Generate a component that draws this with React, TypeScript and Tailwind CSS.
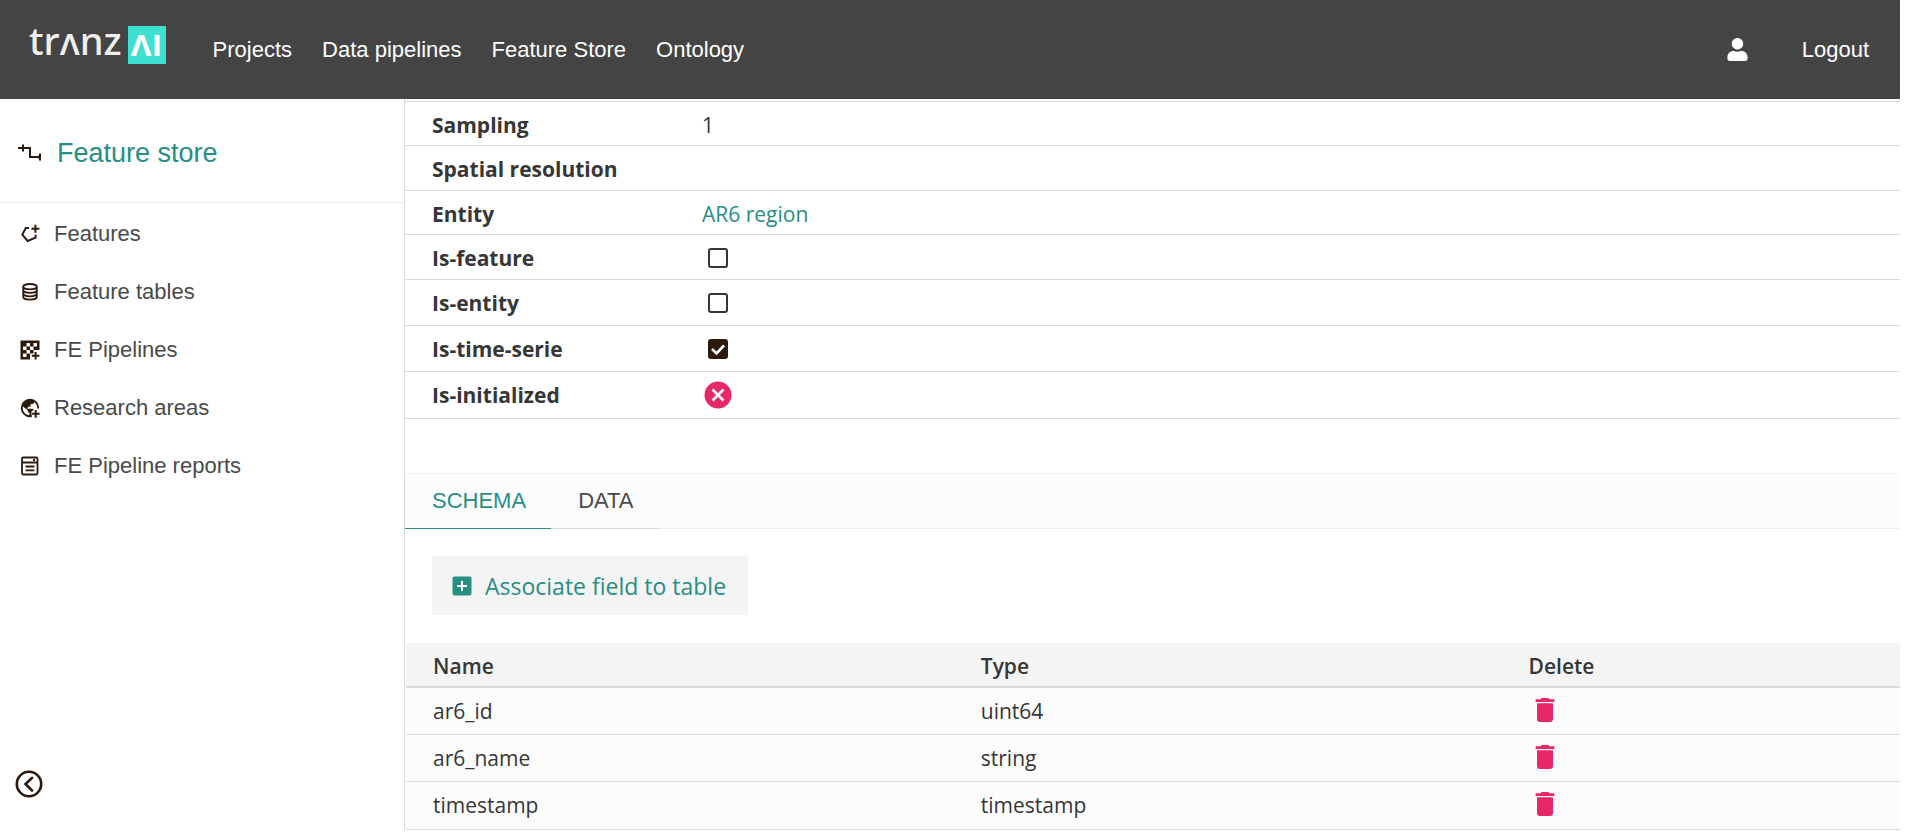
import type { ReactNode } from "react";
import { FaUser } from "react-icons/fa";
import { MdDelete } from "react-icons/md";

const navLinks = ["Projects", "Data pipelines", "Feature Store", "Ontology"];

const fields = [
  { name: "ar6_id", type: "uint64" },
  { name: "ar6_name", type: "string" },
  { name: "timestamp", type: "timestamp" },
];

function Logo() {
  return (
    <a href="#" aria-label="tranzAI" className="flex h-[38px] items-center gap-[6px] font-['Noto_Sans',sans-serif] text-[38px] leading-[38px] font-semibold text-[#f0f0f0]">
      <span className="pb-[11px] font-medium">trʌnz</span>
      <span className="flex h-[38px] w-[38px] items-center justify-center bg-[#40e0d0] pb-2 text-white">ʌı</span>
    </a>
  );
}

function RouteIcon() {
  return (
    <svg width="24" height="18" viewBox="0 0 24 18" fill="none" stroke="currentColor" strokeWidth="2" aria-hidden="true">
      <path d="M0 4h12v9h10M5 0.5v7M22 9.5v7" />
      <path d="M22.5 9.5v7l-3.5-3.5z" fill="currentColor" stroke="none" />
    </svg>
  );
}

function FeatureIcon() {
  return (
    <svg width="20" height="20" viewBox="0 0 20 20" fill="none" stroke="currentColor" strokeWidth="2" aria-hidden="true">
      <path d="M9 4H5.800L2.300 10.600l5.300 6.400 8-3.400V10.800M15.400 0.800v8M11.400 4.800h8" />
    </svg>
  );
}

function DatabaseIcon() {
  return (
    <svg width="20" height="20" viewBox="0 0 20 20" fill="none" stroke="currentColor" strokeWidth="1.800" aria-hidden="true">
      <ellipse cx="10" cy="4.700" rx="6.800" ry="2.700" />
      <path d="M3.200 4.700v10.300c0 1.500 3 2.700 6.800 2.700s6.800-1.200 6.800-2.700V4.700M3.200 8.200c0 1.500 3 2.700 6.800 2.700s6.800-1.200 6.800-2.700M3.200 11.600c0 1.500 3 2.700 6.800 2.700s6.800-1.200 6.800-2.700" />
    </svg>
  );
}

function CheckerPlusIcon() {
  return (
    <svg width="20" height="20" viewBox="0 0 20 20" aria-hidden="true">
      <path d="M0.500 0.500h19v19h-19z" fill="currentColor" />
      <path
        d="M6.500 3H10v3.500H6.500zM13.500 3H17v3.500h-3.500zM3 6.500h3.500V10H3zM10 6.500h3.500V10H10zM6.500 10H10v3.500H6.500zM3 13.500h3.500V17H3zM10 13.500h1.500V20H10zM13.500 10H20v10h-9.500v-6.500h3z"
        fill="white"
      />
      <path d="M15.600 12v7.600M11.800 15.800h7.600" stroke="currentColor" strokeWidth="2" />
    </svg>
  );
}

function GlobePlusIcon() {
  return (
    <svg width="20" height="20" viewBox="0 0 20 20" aria-hidden="true">
      <circle cx="10" cy="10" r="8.300" fill="none" stroke="currentColor" strokeWidth="1.900" />
      <path d="M3.500 5C5 2.500 7.300 1.500 10 1.500c1.600 0 3 .4 4 .9v1.900c0 1-.8 1.800-1.800 1.800h-1.700v1.800c0 .6-.4.900-.9.900H7.800v1.800L6 10.500 2.500 8z" fill="currentColor" />
      <path d="M2 8l5.800 4.200v.8c0 1 .7 1.800 1.600 1.800v3.700h2V14l2-1.500v-.9c0-.5-.4-.9-.9-.9H7.500z" fill="currentColor" />
      <path d="M11.800 12.800h2.500v-2.300H20V20h-8.200z" fill="white" />
      <path d="M15.700 12v7.800M11.800 15.800h7.800" stroke="currentColor" strokeWidth="2" />
    </svg>
  );
}

function ReportIcon() {
  return (
    <svg width="20" height="20" viewBox="0 0 20 20" fill="none" stroke="currentColor" strokeWidth="1.800" aria-hidden="true">
      <rect x="2" y="1.500" width="15.500" height="17" rx="1.200" />
      <path d="M2 6.500h15.500M5.500 10.500h9M5.500 14.300h9M13 4h2" />
    </svg>
  );
}

function CloseCircleIcon() {
  return (
    <svg width="28" height="28" viewBox="0 0 28 28" role="img" aria-label="No">
      <circle cx="14" cy="14" r="13.500" fill="#e72866" />
      <path d="M8.500 8.500l11 11M19.500 8.500l-11 11" stroke="white" strokeWidth="2.600" />
    </svg>
  );
}

function PlusBoxIcon() {
  return (
    <svg width="20" height="20" viewBox="0 0 20 20" aria-hidden="true">
      <rect x="0.500" y="0.500" width="19" height="19" rx="2" fill="currentColor" />
      <path d="M10 5v10M5 10h10" stroke="white" strokeWidth="2" />
    </svg>
  );
}

function CollapseIcon() {
  return (
    <svg width="28" height="28" viewBox="0 0 28 28" fill="none" stroke="currentColor" strokeWidth="2.600" strokeLinecap="round" aria-hidden="true">
      <circle cx="14" cy="14" r="12.200" />
      <path d="M17 8l-6.500 6 6.500 6.500" />
    </svg>
  );
}

function Tick({ id, checked = false }: { id: string; checked?: boolean }) {
  return (
    <span className="ml-[6px] inline-grid">
      <input
        id={id}
        type="checkbox"
        defaultChecked={checked}
        className="peer col-start-1 row-start-1 size-5 appearance-none rounded-[3px] border-2 border-[#363636] checked:border-[#2c1a0e] checked:bg-[#2c1a0e]"
      />
      <svg viewBox="0 0 20 20" className="pointer-events-none col-start-1 row-start-1 size-5 opacity-0 peer-checked:opacity-100" aria-hidden="true">
        <path d="M4 10l4.500 4.500L16 6.500" fill="none" stroke="white" strokeWidth="2.600" />
      </svg>
    </span>
  );
}

const menu: { label: string; icon: ReactNode }[] = [
  { label: "Features", icon: <FeatureIcon /> },
  { label: "Feature tables", icon: <DatabaseIcon /> },
  { label: "FE Pipelines", icon: <CheckerPlusIcon /> },
  { label: "Research areas", icon: <GlobePlusIcon /> },
  { label: "FE Pipeline reports", icon: <ReportIcon /> },
];

const details: { label: string; value: ReactNode; row: string; field?: string }[] = [
  { label: "Sampling", value: "1", row: "h-11 pt-[2px]" },
  { label: "Spatial resolution", value: "", row: "h-[45px] pt-[2px]" },
  { label: "Entity", value: <a href="#" className="text-[#268e83]">AR6 region</a>, row: "h-11 pt-[2px]" },
  { label: "Is-feature", value: <Tick id="is-feature" />, row: "h-[45px] pt-[2px]", field: "is-feature" },
  { label: "Is-entity", value: <Tick id="is-entity" />, row: "h-[46px]", field: "is-entity" },
  { label: "Is-time-serie", value: <Tick id="is-time-serie" checked />, row: "h-[46px]", field: "is-time-serie" },
  { label: "Is-initialized", value: <span className="ml-[2px]"><CloseCircleIcon /></span>, row: "h-[47px]" },
];

export default function App() {
  return (
    <div className="min-h-screen bg-white pr-[19px] font-['Liberation_Sans',Arial,sans-serif] text-[22px] leading-[26px] text-[#4a4a4a]">
      <header className="flex h-[99px] items-center bg-[#444444] pr-[31px] pl-[29px] text-white">
        <div className="pb-[9px]">
          <Logo />
        </div>
        <nav className="ml-[47px] flex flex-1 gap-[30px]">
          {navLinks.map((link) => (
            <a key={link} href="#">{link}</a>
          ))}
        </nav>
        <a href="#" aria-label="Account" className="mr-[53px]">
          <FaUser size={23} />
        </a>
        <button type="button">Logout</button>
      </header>

      <div className="flex">
        <aside className="flex w-[404px] shrink-0 flex-col">
          <h1 className="flex h-[104px] items-center gap-[15px] border-b border-[#ededed] pt-[4px] pl-[18px] text-[27px] leading-8 text-[#268e83]">
            <span className="text-[#2c1a0e]"><RouteIcon /></span>
            Feature store
          </h1>
          <ul className="pt-[2px]">
            {menu.map((item) => (
              <li key={item.label}>
                <a href="#" className="flex h-[58px] items-center gap-[14px] pl-5">
                  <span className="text-[#2c1a0e]">{item.icon}</span>
                  {item.label}
                </a>
              </li>
            ))}
          </ul>
          <button type="button" aria-label="Collapse sidebar" className="mt-auto mb-8 ml-[15px] self-start text-[#2c1a0e]">
            <CollapseIcon />
          </button>
        </aside>

        <main className="min-w-0 flex-1 border-l border-[#dbdbdb] pt-[2px]">
          <dl className="border-t border-[#dbdbdb] font-['Open_Sans','Noto_Sans',sans-serif] text-[21px] text-[#363636]">
            {details.map((d) => (
              <div key={d.label} className={`flex items-center border-b border-[#dbdbdb] pl-[27px] ${d.row}`}>
                <dt className="w-[270px] font-bold">
                  {d.field ? <label htmlFor={d.field}>{d.label}</label> : d.label}
                </dt>
                <dd className="flex items-center">{d.value}</dd>
              </div>
            ))}
          </dl>

          <div role="tablist" className="mt-[54px] flex h-14 border-t border-b border-[#ededed] bg-[#fcfcfc]">
            <button type="button" role="tab" aria-selected="true" className="-mb-px border-b border-[#268e83] pr-[25px] pl-[27px] text-[#268e83]">SCHEMA</button>
            <button type="button" role="tab" aria-selected="false" className="-mb-px border-b border-[#dbdbdb] pr-[25px] pl-[27px]">DATA</button>
          </div>

          <div className="px-[27px] py-[27px] font-['Open_Sans','Noto_Sans',sans-serif]">
            <button type="button" className="flex h-[59px] items-center gap-[13px] bg-[#f4f4f4] pr-[22px] pl-5 text-[23px] text-[#268e83]">
              <PlusBoxIcon />
              Associate field to table
            </button>
          </div>

          <div className="pt-px pl-px font-['Open_Sans','Noto_Sans',sans-serif] text-[21px] text-[#363636]">
            <table className="w-full table-fixed text-left">
              <thead className="bg-[#f4f4f4]">
                <tr className="h-11 border-b-2 border-[#dbdbdb]">
                  <th className="w-[37%] pt-[2px] pl-[27px] font-semibold">Name</th>
                  <th className="w-[37%] pt-[2px] pl-[22px] font-semibold">Type</th>
                  <th className="pt-[2px] pl-[17px] font-semibold">Delete</th>
                </tr>
              </thead>
              <tbody className="bg-[#fcfcfc]">
                {fields.map((f) => (
                  <tr key={f.name} className="h-[47px] border-b border-[#dbdbdb] last:h-12">
                    <td className="pl-[27px]">{f.name}</td>
                    <td className="pl-[22px]">{f.type}</td>
                    <td className="pl-[17px]">
                      <button type="button" aria-label={`Delete ${f.name}`} className="block pb-[2px] text-[#e72866]">
                        <MdDelete size={32} />
                      </button>
                    </td>
                  </tr>
                ))}
              </tbody>
            </table>
          </div>
        </main>
      </div>
    </div>
  );
}
